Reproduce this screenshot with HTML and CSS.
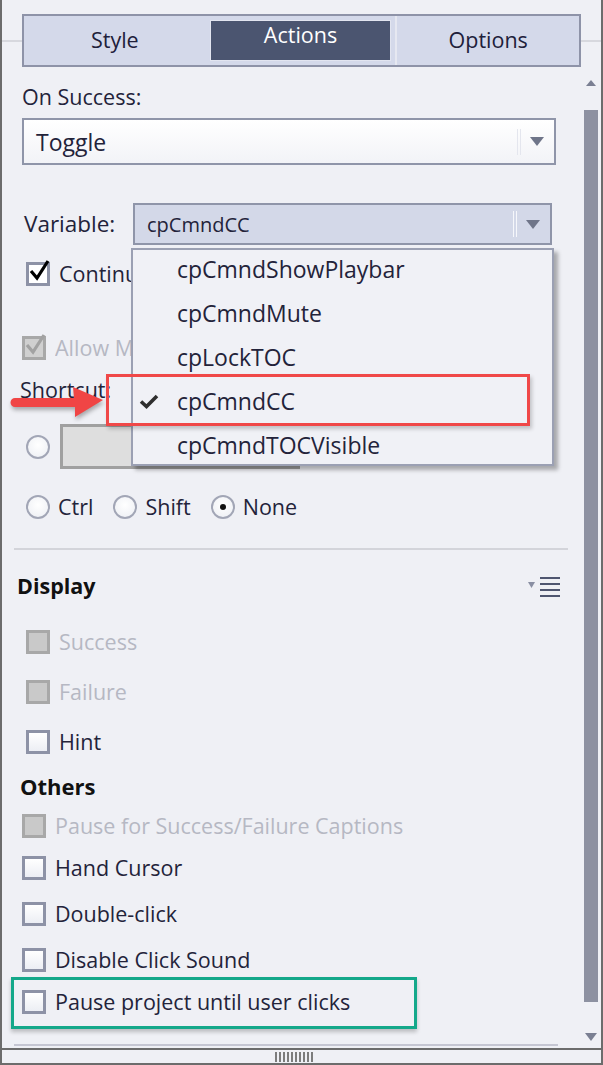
FILE: index.html
```html
<!DOCTYPE html>
<html>
<head>
<meta charset="utf-8">
<link rel="stylesheet" href="styles.css">
</head>
<body>
<div class="panel">
  <div class="header">
    <div class="tabs">
      <div class="tab">Style</div>
      <div class="tab active">Actions</div>
      <div class="tab">Options</div>
    </div>
  </div>
  <div class="main">
    <div class="content">
      <div class="label on-success">On Success:</div>
      <div class="select toggle">
        <span class="select-text">Toggle</span>
        <span class="select-sep"></span>
        <span class="select-arrow"></span>
      </div>
      <div class="row variable-row">
        <span class="label var-label">Variable:</span>
        <div class="select var-select">
          <span class="select-text">cpCmndCC</span>
          <span class="select-sep"></span>
          <span class="select-arrow"></span>
        </div>
      </div>
      <div class="row cb-row continue-row">
        <span class="cb checked"><svg viewBox="0 0 24 24" width="24" height="24"><path d="M4 12 L10 19 L21 2" fill="none" stroke="#000" stroke-width="3.2"/></svg></span>
        <span class="cb-text clip">Continue Playing the Project</span>
      </div>
      <div class="row cb-row allow-row">
        <span class="cb disabled"><svg viewBox="0 0 24 24" width="24" height="24"><path d="M4 12 L10 19 L21 2" fill="none" stroke="#a2a2a2" stroke-width="3.2"/></svg></span>
        <span class="cb-text dis clip">Allow Mouse Click</span>
      </div>
      <div class="label shortcut-label">Shortcut:</div>
      <div class="row shortcut-row">
        <span class="radio"></span>
        <div class="key-box"></div>
      </div>
      <div class="row mod-row">
        <span class="radio"></span><span class="cb-text mod-text">Ctrl</span>
        <span class="radio"></span><span class="cb-text mod-text">Shift</span>
        <span class="radio selected"></span><span class="cb-text">None</span>
      </div>
      <div class="separator"></div>
      <div class="row section-head">
        <span class="heading">Display</span>
        <svg class="menu-icon" width="32" height="22" viewBox="0 0 32 22"><path d="M0 5 H7 L3.5 11 Z" fill="#8a8fa3"/><rect x="12" y="0" width="20" height="2" fill="#4f5670"/><rect x="12" y="6" width="20" height="2" fill="#4f5670"/><rect x="12" y="12" width="20" height="2" fill="#4f5670"/><rect x="12" y="18" width="20" height="2" fill="#4f5670"/></svg>
      </div>
      <div class="row cb-row success-row">
        <span class="cb disabled"></span><span class="cb-text dis">Success</span>
      </div>
      <div class="row cb-row failure-row">
        <span class="cb disabled"></span><span class="cb-text dis">Failure</span>
      </div>
      <div class="row cb-row hint-row">
        <span class="cb"></span><span class="cb-text">Hint</span>
      </div>
      <div class="heading others">Others</div>
      <div class="row cb-row pause-cap-row">
        <span class="cb disabled"></span><span class="cb-text dis">Pause for Success/Failure Captions</span>
      </div>
      <div class="row cb-row hand-row">
        <span class="cb"></span><span class="cb-text">Hand Cursor</span>
      </div>
      <div class="row cb-row dbl-row">
        <span class="cb"></span><span class="cb-text">Double-click</span>
      </div>
      <div class="row cb-row sound-row">
        <span class="cb"></span><span class="cb-text">Disable Click Sound</span>
      </div>
      <div class="highlight-green">
        <div class="row cb-row">
          <span class="cb"></span><span class="cb-text">Pause project until user clicks</span>
        </div>
      </div>
      <div class="hscroll"></div>
    </div>
    <div class="scrollbar">
      <span class="sb-up"></span>
      <div class="sb-thumb"></div>
      <span class="sb-down"></span>
    </div>
  </div>
  <div class="footer">
    <div class="grip"><i></i><i></i><i></i><i></i><i></i><i></i><i></i><i></i><i></i><i></i></div>
  </div>

  <div class="popup">
    <ul class="menu-list">
      <li>cpCmndShowPlaybar</li>
      <li>cpCmndMute</li>
      <li>cpLockTOC</li>
      <li class="checked-item"><svg class="check" width="20" height="15" viewBox="0 0 20 15"><path d="M2 7.5 L7.5 12.5 L18 2" fill="none" stroke="#2e2e2e" stroke-width="3.6"/></svg>cpCmndCC</li>
      <li>cpCmndTOCVisible</li>
    </ul>
  </div>
  <div class="highlight-red"></div>
  <svg class="red-arrow" width="100" height="40" viewBox="0 0 100 40">
    <path d="M5 14 L64 14 L63 3 L93 16 L65 33 L65 23 L5 23 A4.5 4.5 0 0 1 5 14 Z" fill="#f04545"/>
  </svg>
</div>
</body>
</html>
```

FILE: styles.css
```css
* { box-sizing: border-box; }
html, body { margin: 0; padding: 0; }
body {
  background: #eff0f5;
  font-family: "Open Sans", "Noto Sans", sans-serif;
  font-size: 21.5px;
  color: #23233a;
}
.panel {
  position: relative;
  width: 603px;
  height: 1065px;
  border-left: 2px solid #6c6c6c;
  border-right: 2px solid #6c6c6c;
  background: #eff0f5;
  overflow: hidden;
}
.header {
  height: 72px;
  padding-top: 14px;
  padding-left: 20px;
  background: linear-gradient(#d7d8de, #d7d8de) 0 40px / 100% 2px no-repeat;
}
.tabs {
  width: 559px;
  height: 53px;
  display: flex;
  border: 2px solid #8e93a8;
  background: #d4d9ea;
}
.tab {
  flex: 1;
  display: flex;
  align-items: center;
  justify-content: center;
  font-size: 21.5px;
  color: #20203a;
  padding-bottom: 2px;
}
.tab + .tab { border-left: 2px solid #e6e8f1; }
.tab.active {
  background: #4b5570;
  color: #fff;
  border: 4px solid #d4d9ea;
  box-shadow: inset 0 0 0 1px #e2e5f0;
  align-items: flex-start;
  padding-top: 0;
  line-height: 30px;
}
.tab.active + .tab { border-left: 2px solid #e6e8f1; }

.main {
  height: 976px;
  display: flex;
}
.content {
  width: 582px;
  overflow: hidden;
}
.row { display: flex; align-items: center; }
.label { line-height: 26px; height: 26px; white-space: nowrap; }
.on-success { margin-top: 12px; margin-left: 20px; }

.select {
  display: flex;
  align-items: center;
  border: 2px solid #8f95a9;
  position: relative;
}
.select-text { padding-left: 12px; flex: 1; }
.select-sep {
  width: 4px;
  height: 26px;
  border-left: 1px solid #f6f7fb;
  border-right: 1px solid #f6f7fb;
  margin-right: 9px;
}
.select-arrow {
  width: 0; height: 0;
  border-left: 7px solid transparent;
  border-right: 7px solid transparent;
  border-top: 9px solid #6f7589;
  margin-right: 10px;
}
.toggle {
  margin-top: 8px;
  margin-left: 20px;
  width: 534px;
  height: 47px;
  background: linear-gradient(#ffffff, #f2f3f7);
  font-size: 23px;
}
.toggle .select-sep { border-color: #e4e6ee; }

.variable-row { margin-top: 38px; height: 42px; margin-left: 22px; }
.var-label { width: 109px; font-size: 22.5px; }
.var-select {
  width: 419px;
  height: 42px;
  background: #d3d8e8;
  font-size: 20px;
}

.cb {
  width: 24px; height: 24px;
  border: 3px solid #8d92a6;
  background: linear-gradient(#ffffff, #eceef4);
  flex: none;
  position: relative;
}
.cb svg { position: absolute; left: -2px; top: -6px; }
.cb.disabled { border-color: #a8a8a8; background: #c9c9c9; }
.cb.checked { background: #fff; }
.cb-row { height: 24px; }
.cb-text { margin-left: 9px; white-space: nowrap; line-height: 24px; }
.cb-text.clip { flex: 1; min-width: 0; overflow: hidden; }
.dis { color: #b6b8c3; }

.continue-row { margin-top: 17px; margin-left: 24px; width: 105px; }
.allow-row { margin-top: 50px; margin-left: 20px; width: 109px; }
.allow-row .cb.disabled { background: #d0d0d0; }
.shortcut-label { margin-top: 17px; margin-left: 18px; }

.radio {
  width: 24px; height: 24px;
  border-radius: 50%;
  border: 2px solid #a2a6b6;
  background: radial-gradient(circle at 50% 40%, #ffffff, #eceef3);
  flex: none;
  display: flex; align-items: center; justify-content: center;
}
.radio.selected::after {
  content: "";
  width: 6px; height: 6px;
  border-radius: 50%;
  background: #111;
}
.shortcut-row { margin-top: 21px; margin-left: 24px; height: 45px; }
.key-box {
  margin-left: 10px;
  width: 240px;
  height: 45px;
  border: 3px solid #a0a0a0;
  background: #dedede;
}
.mod-row { margin-top: 26px; margin-left: 24px; height: 24px; }
.mod-row .cb-text { margin-left: 8px; }
.mod-row .radio:nth-child(3) { margin-left: 20px; }
.mod-row .radio:nth-child(5) { margin-left: 20px; }

.separator {
  margin-top: 29px;
  margin-left: 12px;
  width: 554px;
  height: 2px;
  background: #d3d4da;
}
.section-head {
  margin-top: 23px;
  margin-left: 15px;
  width: 543px;
  height: 26px;
  justify-content: space-between;
}
.heading { font-weight: 700; color: #111; font-size: 21.5px; line-height: 26px; }
.menu-icon { margin-top: 4px; }

.success-row { margin-top: 31px; margin-left: 24px; }
.failure-row { margin-top: 26px; margin-left: 24px; }
.hint-row { margin-top: 26px; margin-left: 24px; }
.others { margin-top: 19px; margin-left: 18px; height: 26px; font-size: 22px; }
.pause-cap-row { margin-top: 15px; margin-left: 20px; }
.hand-row { margin-top: 18px; margin-left: 20px; }
.dbl-row { margin-top: 22px; margin-left: 20px; }
.sound-row { margin-top: 22px; margin-left: 20px; }

.highlight-green {
  margin-top: 5px;
  margin-left: 9px;
  width: 406px;
  height: 52px;
  border: 3px solid #14a88a;
  padding: 10px 0 0 8px;
  box-shadow: 0 3px 4px rgba(0, 0, 0, 0.22);
}
.hscroll {
  margin-top: 15px;
  margin-left: 12px;
  width: 544px;
  height: 2px;
  background: #c5c6d2;
}

.scrollbar {
  width: 14px;
  display: flex;
  flex-direction: column;
  align-items: center;
}
.sb-up {
  margin-top: 8px;
  width: 0; height: 0;
  border-left: 5px solid transparent;
  border-right: 5px solid transparent;
  border-bottom: 6px solid #7a7f92;
}
.sb-thumb {
  margin-top: 24px;
  width: 14px;
  height: 892px;
  background: #8d91a1;
}
.sb-down {
  margin-top: 31px;
  width: 0; height: 0;
  border-left: 6px solid transparent;
  border-right: 6px solid transparent;
  border-top: 8px solid #7a7f92;
}

.footer {
  height: 17px;
  border-top: 2px solid #6c6c6c;
  border-bottom: 2px solid #6c6c6c;
  display: flex;
  justify-content: center;
  padding-top: 2px;
  padding-right: 16px;
}
.grip { display: flex; gap: 2px; height: 10px; }
.grip i { display: block; width: 2px; height: 10px; background: #7c7c7c; }

.popup {
  position: absolute;
  left: 129px;
  top: 248px;
  width: 423px;
  height: 218px;
  border: 2px solid #9ba0b3;
  background: #f0f1f6;
  box-shadow: 4px 4px 4px rgba(0, 0, 0, 0.3);
  overflow: hidden;
}
.menu-list {
  list-style: none;
  margin: -3px 0 0 0;
  padding: 0;
}
.menu-list li {
  height: 44px;
  line-height: 44px;
  padding-left: 44px;
  font-size: 23px;
  position: relative;
}
.check { position: absolute; left: 6px; top: 15px; }

.highlight-red {
  position: absolute;
  left: 104px;
  top: 374px;
  width: 424px;
  height: 52px;
  border: 3px solid #f04848;
  box-shadow: 2px 3px 4px rgba(0, 0, 0, 0.2);
}
.red-arrow {
  position: absolute;
  left: 8px;
  top: 384px;
  filter: drop-shadow(1px 3px 2px rgba(0, 0, 0, 0.3));
}
```
